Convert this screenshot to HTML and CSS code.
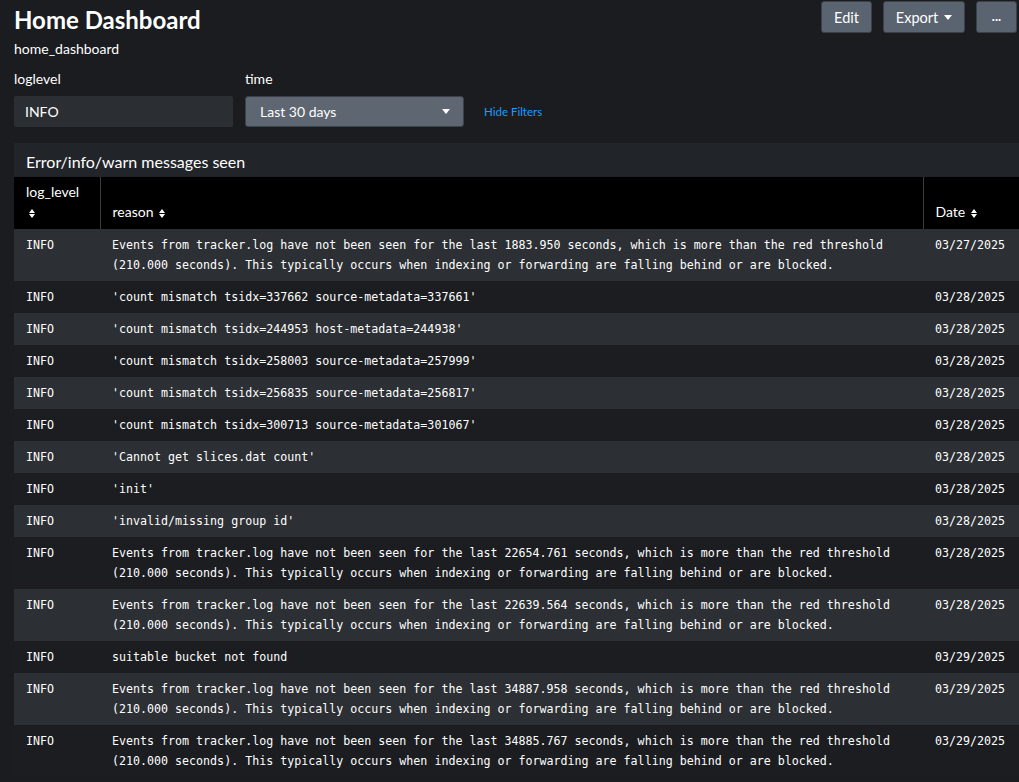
FILE: index.html
```html
<!DOCTYPE html>
<html>
<head>
<meta charset="utf-8">
<link rel="stylesheet" href="styles.css">
</head>
<body>
<div class="page">
  <header class="top">
    <div class="titles">
      <h1 class="title">Home Dashboard</h1>
      <div class="subtitle">home_dashboard</div>
    </div>
    <div class="actions">
      <button class="btn btn-edit">Edit</button>
      <button class="btn btn-export">Export <span class="caret"></span></button>
      <button class="btn btn-more">...</button>
    </div>
  </header>

  <div class="filters">
    <div class="field">
      <label class="field-label">loglevel</label>
      <div class="textbox">INFO</div>
    </div>
    <div class="field">
      <label class="field-label">time</label>
      <div class="dropdown"><span>Last 30 days</span><span class="caret"></span></div>
    </div>
    <a class="hide-filters">Hide Filters</a>
  </div>

  <section class="panel">
    <div class="panel-title">Error/info/warn messages seen</div>
    <table class="grid">
      <thead>
        <tr>
          <th class="c-level">log_level<br><span class="sort"></span></th>
          <th class="c-reason">reason <span class="sort"></span></th>
          <th class="c-date">Date <span class="sort"></span></th>
        </tr>
      </thead>
      <tbody>
        <tr><td>INFO</td><td>Events from tracker.log have not been seen for the last 1883.950 seconds, which is more than the red threshold (210.000 seconds). This typically occurs when indexing or forwarding are falling behind or are blocked.</td><td>03/27/2025</td></tr>
        <tr><td>INFO</td><td>'count mismatch tsidx=337662 source-metadata=337661'</td><td>03/28/2025</td></tr>
        <tr><td>INFO</td><td>'count mismatch tsidx=244953 host-metadata=244938'</td><td>03/28/2025</td></tr>
        <tr><td>INFO</td><td>'count mismatch tsidx=258003 source-metadata=257999'</td><td>03/28/2025</td></tr>
        <tr><td>INFO</td><td>'count mismatch tsidx=256835 source-metadata=256817'</td><td>03/28/2025</td></tr>
        <tr><td>INFO</td><td>'count mismatch tsidx=300713 source-metadata=301067'</td><td>03/28/2025</td></tr>
        <tr><td>INFO</td><td>'Cannot get slices.dat count'</td><td>03/28/2025</td></tr>
        <tr><td>INFO</td><td>'init'</td><td>03/28/2025</td></tr>
        <tr><td>INFO</td><td>'invalid/missing group id'</td><td>03/28/2025</td></tr>
        <tr><td>INFO</td><td>Events from tracker.log have not been seen for the last 22654.761 seconds, which is more than the red threshold (210.000 seconds). This typically occurs when indexing or forwarding are falling behind or are blocked.</td><td>03/28/2025</td></tr>
        <tr><td>INFO</td><td>Events from tracker.log have not been seen for the last 22639.564 seconds, which is more than the red threshold (210.000 seconds). This typically occurs when indexing or forwarding are falling behind or are blocked.</td><td>03/28/2025</td></tr>
        <tr><td>INFO</td><td>suitable bucket not found</td><td>03/29/2025</td></tr>
        <tr><td>INFO</td><td>Events from tracker.log have not been seen for the last 34887.958 seconds, which is more than the red threshold (210.000 seconds). This typically occurs when indexing or forwarding are falling behind or are blocked.</td><td>03/29/2025</td></tr>
        <tr><td>INFO</td><td>Events from tracker.log have not been seen for the last 34885.767 seconds, which is more than the red threshold (210.000 seconds). This typically occurs when indexing or forwarding are falling behind or are blocked.</td><td>03/29/2025</td></tr>
      </tbody>
    </table>
  </section>
</div>
</body>
</html>
```

FILE: styles.css
```css
* { box-sizing: border-box; }
html, body { margin: 0; padding: 0; }
body {
  background: #1a1c20;
  color: #ffffff;
  font-family: "Lato", "Open Sans", "Liberation Sans", sans-serif;
  overflow: hidden;
}
.page { padding: 0 0 0 14px; }

.top {
  display: flex;
  justify-content: space-between;
  align-items: flex-start;
}
.titles { padding-top: 5px; }
.title {
  margin: 0;
  font-size: 24px;
  font-weight: 700;
  line-height: 30px;
  letter-spacing: 0;
}
.subtitle {
  font-size: 14px;
  line-height: 16px;
  margin-top: 6px;
}
.actions {
  display: flex;
  gap: 11px;
  padding-top: 1px;
  padding-right: 2px;
}
.btn {
  height: 32px;
  background: #5a6370;
  border: 1px solid #3b4049;
  border-radius: 3px;
  color: #fff;
  font-family: inherit;
  font-size: 14.5px;
  padding: 0 10px;
  display: flex;
  align-items: center;
  gap: 6px;
}
.btn-edit { width: 51px; justify-content: center; }
.btn-export { width: 82px; justify-content: center; }
.btn-more { width: 41px; justify-content: center; font-size: 13px; font-weight: 700; padding-bottom: 2px; }
.caret {
  display: inline-block;
  width: 0; height: 0;
  border-left: 4px solid transparent;
  border-right: 4px solid transparent;
  border-top: 5px solid #fff;
}

.filters {
  display: flex;
  align-items: flex-end;
  gap: 12px;
  margin-top: 14px;
}
.field { display: flex; flex-direction: column; width: 219px; }
.field-label { font-size: 14px; line-height: 16px; margin-bottom: 9px; }
.textbox {
  height: 31px;
  background: #2b2f34;
  border-radius: 2px;
  font-size: 14px;
  display: flex;
  align-items: center;
  padding: 0 11px;
}
.dropdown {
  height: 31px;
  background: #5e6672;
  border: 1px solid #3b4049;
  border-radius: 3px;
  font-size: 14px;
  display: flex;
  align-items: center;
  justify-content: space-between;
  padding: 0 13px 0 14px;
}
.hide-filters {
  color: #1a9cff;
  font-size: 11.5px;
  line-height: 31px;
  margin-left: 8px;
}

.panel {
  margin-top: 16px;
  background: #212428;
}
.panel-title {
  height: 34px;
  font-size: 16px;
  padding: 10px 12px 0;
  line-height: 18px;
}
.grid {
  width: 100%;
  border-collapse: collapse;
  table-layout: fixed;
}
.grid th {
  background: #000;
  text-align: left;
  font-weight: 400;
  font-size: 14px;
  height: 52px;
  vertical-align: bottom;
  padding: 0 12px 7px;
  line-height: 20px;
  border-left: 1px solid #3a3d42;
}
.grid th:first-child { border-left: none; }
.c-level { width: 86px; }
.c-date { width: 96px; }
.sort {
  display: inline-block;
  width: 7px; height: 9px;
  position: relative;
  vertical-align: -1px;
  margin-left: 2px;
}
.c-level .sort { margin-left: 3px; }
.sort::before, .sort::after {
  content: "";
  position: absolute;
  left: 0;
  border-left: 3.5px solid transparent;
  border-right: 3.5px solid transparent;
}
.sort::before { top: 0; border-bottom: 4px solid #fff; }
.sort::after { bottom: 0; border-top: 4px solid #fff; }

.grid td {
  font-family: "DejaVu Sans Mono", "Liberation Mono", monospace;
  font-size: 11.65px;
  line-height: 20px;
  padding: 6px 12px;
  vertical-align: top;
  color: #fff;
}
.grid td:nth-child(2) { padding-right: 30px; }
.grid tbody tr:nth-child(odd) { background: #2c2f33; }
.grid tbody tr:nth-child(even) { background: #1b1d21; }
```
